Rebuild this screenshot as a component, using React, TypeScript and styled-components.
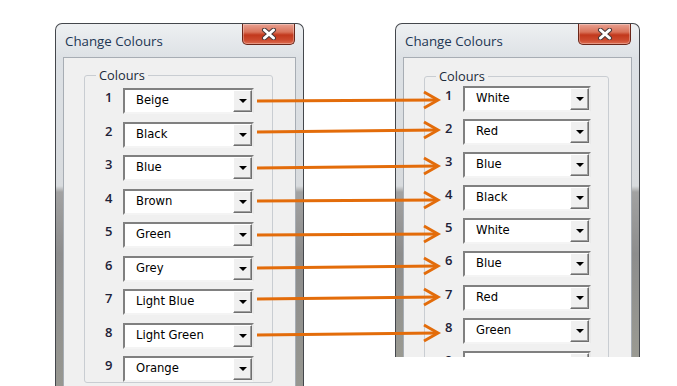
import React from 'react';
import styled, { createGlobalStyle } from 'styled-components';

const GlobalStyle = createGlobalStyle`
  html, body {
    margin: 0;
    padding: 0;
    background: #fff;
  }
  body {
    width: 677px;
    height: 386px;
    overflow: hidden;
    font-family: "DejaVu Sans", sans-serif;
  }
`;

const Desktop = styled.div`
  position: relative;
  display: flex;
  align-items: flex-start;
  gap: 91px;
  padding: 23px 0 0 55px;
  height: 386px;
  box-sizing: border-box;
  overflow: hidden;
`;

const Window = styled.div<{ $w: number; $h: number }>`
  flex: none;
  display: flex;
  flex-direction: column;
  width: ${(p) => p.$w}px;
  height: ${(p) => p.$h}px;
  box-sizing: border-box;
  padding: 0 7px;
  border: 1px solid #44474c;
  border-bottom: none;
  border-radius: 7px 7px 0 0;
  overflow: hidden;
  background: linear-gradient(
    to bottom,
    #eef0f2 0px,
    #dde1e5 34px,
    #d8dbde 162px,
    #a2a2a2 168px,
    #8d8d8d 230px,
    #9a9a92 100%
  );
`;

const TitleBar = styled.div`
  flex: none;
  display: flex;
  justify-content: space-between;
  align-items: flex-start;
  height: 33px;
`;

const Title = styled.div`
  margin: 9px 0 0 2px;
  font-family: "Open Sans", sans-serif;
  font-size: 13.3px;
  line-height: 17px;
  color: #1d3653;
`;

const CloseButton = styled.div`
  display: flex;
  align-items: center;
  justify-content: center;
  width: 53px;
  height: 21px;
  margin-right: 1px;
  box-sizing: border-box;
  border: 1px solid #6a2619;
  border-top: none;
  border-radius: 0 0 5px 5px;
  background: linear-gradient(
    to bottom,
    #e9a192 0%,
    #d9735a 40%,
    #c2381c 55%,
    #cc4a2e 80%,
    #de6e52 100%
  );
  box-shadow: inset 0 0 0 1px rgba(255, 255, 255, 0.3);
`;

const Client = styled.div<{ $padTop: number }>`
  flex: 1;
  box-sizing: border-box;
  padding: ${(p) => p.$padTop}px 0 0 20px;
  background: #f0f0f0;
  border: 1px solid #a7adb4;
  border-bottom: none;
`;

const Group = styled.fieldset<{ $w: number; $first: number; $gap: number }>`
  display: flex;
  flex-direction: column;
  gap: ${(p) => p.$gap}px;
  width: ${(p) => p.$w}px;
  box-sizing: border-box;
  margin: 0;
  padding: ${(p) => p.$first}px 0 0 0;
  border: 1px solid #c9cdd2;
  border-radius: 3px;
  min-inline-size: 0;
`;

const Legend = styled.legend`
  margin-left: 11px;
  padding: 0 3px;
  font-family: "Open Sans", sans-serif;
  font-size: 12.8px;
  line-height: 15px;
  color: #1b2a3a;
`;

const Row = styled.div`
  display: flex;
  align-items: flex-start;
  height: 26px;
`;

const Num = styled.div`
  width: 38px;
  box-sizing: border-box;
  padding: 1px 0 0 20px;
  font-family: "Open Sans", sans-serif;
  font-weight: 600;
  font-size: 13px;
  line-height: 16px;
  color: #1e2238;
`;

const Combo = styled.div<{ $w: number }>`
  display: flex;
  width: ${(p) => p.$w}px;
  height: 26px;
  box-sizing: border-box;
  background: #fff;
  border-style: solid;
  border-width: 2px;
  border-color: #808080 #e9e9e9 #f4f4f4 #808080;
`;

const ComboText = styled.div`
  flex: 1;
  padding-left: 11px;
  font-size: 11.6px;
  line-height: 21px;
  color: #000;
  white-space: nowrap;
`;

const DropButton = styled.div`
  display: flex;
  align-items: center;
  justify-content: center;
  width: 19px;
  box-sizing: border-box;
  background: #f0f0f0;
  border-style: solid;
  border-width: 1px;
  border-color: #fff #6f6f6f #6f6f6f #fff;
  box-shadow: inset -1px -1px 0 #a0a0a0;

  &::after {
    content: '';
    border-left: 4px solid transparent;
    border-right: 4px solid transparent;
    border-top: 4px solid #000;
  }
`;

const ArrowLayer = styled.svg`
  position: absolute;
  left: 0;
  top: 0;
  pointer-events: none;
`;

type WinSpec = {
  w: number;
  h: number;
  padTop: number;
  groupW: number;
  first: number;
  gap: number;
  comboW: number;
  items: string[];
};

const leftWin: WinSpec = {
  w: 249,
  h: 400,
  padTop: 10,
  groupW: 189,
  first: 5,
  gap: 7.5,
  comboW: 131,
  items: ['Beige', 'Black', 'Blue', 'Brown', 'Green', 'Grey', 'Light Blue', 'Light Green', 'Orange'],
};

// last row is cut off by the bottom of the screenshot
const rightWin: WinSpec = {
  w: 245,
  h: 334,
  padTop: 11,
  groupW: 185,
  first: 2,
  gap: 7.1,
  comboW: 128,
  items: ['White', 'Red', 'Blue', 'Black', 'White', 'Blue', 'Red', 'Green', ''],
};

// left end y, right end y
const arrows: [number, number][] = [
  [101, 100],
  [132, 130],
  [168, 166],
  [201, 200],
  [235, 234],
  [268, 266],
  [299, 297],
  [335, 333],
];

const CloseGlyph = () => (
  <svg width="16" height="12" viewBox="0 0 16 12">
    <path d="M3.5 2 L12.5 10 M12.5 2 L3.5 10" stroke="#4a3a3a" strokeWidth="5" strokeLinecap="round" />
    <path d="M3.5 2 L12.5 10 M12.5 2 L3.5 10" stroke="#fff" strokeWidth="3" strokeLinecap="round" />
  </svg>
);

const ColourWindow = ({ spec }: { spec: WinSpec }) => (
  <Window $w={spec.w} $h={spec.h}>
    <TitleBar>
      <Title>Change Colours</Title>
      <CloseButton>
        <CloseGlyph />
      </CloseButton>
    </TitleBar>
    <Client $padTop={spec.padTop}>
      <Group $w={spec.groupW} $first={spec.first} $gap={spec.gap}>
        <Legend>Colours</Legend>
        {spec.items.map((name, i) => (
          <Row key={i}>
            <Num>{i + 1}</Num>
            <Combo $w={spec.comboW}>
              <ComboText>{name}</ComboText>
              <DropButton />
            </Combo>
          </Row>
        ))}
      </Group>
    </Client>
  </Window>
);

const App = () => {
  return (
    <>
      <GlobalStyle />
      <Desktop>
        <ColourWindow spec={leftWin} />
        <ColourWindow spec={rightWin} />
        <ArrowLayer width="677" height="386" viewBox="0 0 677 386">
          {arrows.map(([a, b], i) => (
            <g key={i} stroke="#e36c0a" strokeWidth="3" fill="none">
              <line x1="257" y1={a} x2="437" y2={b} />
              <polyline points={`424,${b - 8} 438,${b} 424,${b + 8}`} />
            </g>
          ))}
        </ArrowLayer>
      </Desktop>
    </>
  );
};

export default App;
